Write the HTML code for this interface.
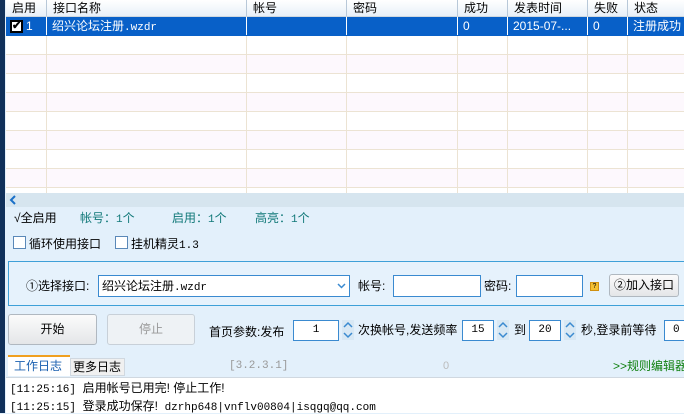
<!DOCTYPE html>
<html><head><meta charset="utf-8"><style>
*{margin:0;padding:0;box-sizing:border-box}
body{width:684px;height:413px;overflow:hidden;background:#e3f0fb;font-family:"Liberation Sans","Noto Sans CJK SC",sans-serif;font-size:12px;color:#000;position:relative}
.a{position:absolute;white-space:nowrap}
.m{font-family:"Liberation Mono","Noto Sans CJK SC",monospace;font-size:11px}
.hdr{position:absolute;left:6px;top:0;width:678px;height:17px;background:linear-gradient(#fff,#e8f0f8);border-bottom:1px solid #cfd8e0}
.hc{position:absolute;top:0;height:16px;line-height:16px;padding-left:6px;border-left:1px solid #b8c8d8}
.row{position:absolute;left:6px;width:678px;height:19px;border-bottom:1px solid #ece3d3}
.vl{position:absolute;top:17px;height:176px;width:1px;background:#ece3d3}
.sel{background:#0860c8;color:#fff}
.cell{position:absolute;top:0;height:18px;line-height:18px;padding-left:5px}
.btn{position:absolute;border:1px solid #b0b8c0;border-radius:3px;background:linear-gradient(#fbfbfb,#e4e6e8);text-align:center}
.in{position:absolute;background:#fff;border:1px solid #3a8ad0;text-align:center}
.cb{position:absolute;width:13px;height:13px;border:1px solid #5a88b8;background:#fff}
.sp{position:absolute;width:12px;height:20px;background:#d8e8f4}
</style></head><body>
<div class="a" style="left:0;top:0;width:5px;height:413px;background:#10305a"></div>
<div style="position:absolute;left:6px;top:17px;width:678px;height:176px;background:#fff"></div>
<div class="row" style="top:55px;background:#fdf8fd"></div>
<div class="row" style="top:74px"></div>
<div class="row" style="top:93px;background:#fdf8fd"></div>
<div class="row" style="top:112px"></div>
<div class="row" style="top:131px;background:#fdf8fd"></div>
<div class="row" style="top:150px"></div>
<div class="row" style="top:169px;background:#fdf8fd"></div>
<div class="row" style="top:36px"></div>
<div class="vl" style="left:46px"></div><div class="vl" style="left:246px"></div><div class="vl" style="left:346px"></div><div class="vl" style="left:457px"></div><div class="vl" style="left:507px"></div><div class="vl" style="left:587px"></div><div class="vl" style="left:627px"></div>
<div class="row sel" style="top:17px;height:19px;border:none">
<div class="a" style="left:4px;top:3px;width:13px;height:13px;background:#fff;border:2px solid #000;font-size:11px;line-height:9px;color:#000;text-align:center;font-weight:bold">✔</div>
<div class="cell" style="left:15px">1</div>
<div class="cell" style="left:40px;border-left:1px solid #fff">绍兴论坛注册<span class="m">.wzdr</span></div>
<div class="cell" style="left:240px;border-left:1px solid #fff;width:100px"></div>
<div class="cell" style="left:340px;border-left:1px solid #fff;width:111px"></div>
<div class="cell" style="left:451px;border-left:1px solid #fff">0</div>
<div class="cell" style="left:501px;border-left:1px solid #fff">2015-07-...</div>
<div class="cell" style="left:581px;border-left:1px solid #fff">0</div>
<div class="cell" style="left:621px;border-left:1px solid #fff">注册成功</div>
</div>
<div class="hdr">
<div class="hc" style="left:0;border:none">启用</div>
<div class="hc" style="left:40px">接口名称</div>
<div class="hc" style="left:240px">帐号</div>
<div class="hc" style="left:340px">密码</div>
<div class="hc" style="left:451px">成功</div>
<div class="hc" style="left:501px">发表时间</div>
<div class="hc" style="left:581px">失败</div>
<div class="hc" style="left:621px">状态</div>
</div>
<div class="a" style="left:6px;top:193px;width:678px;height:14px;background:#d6e5ef"></div>
<svg class="a" style="left:9px;top:195px" width="8" height="10"><path d="M6 1L2 5L6 9" stroke="#1a70c8" stroke-width="2" fill="none"/></svg>
<div class="a" style="left:14px;top:209px">√全启用</div>
<div class="a" style="left:80px;top:209px;color:#107878">帐号：<span class="m">1</span>个</div>
<div class="a" style="left:172px;top:209px;color:#107878">启用：<span class="m">1</span>个</div>
<div class="a" style="left:255px;top:209px;color:#107878">高亮：<span class="m">1</span>个</div>
<div class="cb" style="left:13px;top:236px"></div><div class="a" style="left:29px;top:235px">循环使用接口</div>
<div class="cb" style="left:115px;top:236px"></div><div class="a" style="left:131px;top:235px">挂机精灵<span class="m">1.3</span></div>
<div class="a" style="left:8px;top:261px;width:690px;height:45px;border:1px solid #3ea0d8;background:#e6f2fc"></div>
<div class="a" style="left:26px;top:277px">①选择接口:</div>
<div class="a" style="left:98px;top:275px;width:252px;height:22px;background:#fff;border:1px solid #3a8ad0;line-height:20px;padding-left:3px">绍兴论坛注册<span class="m">.wzdr</span><svg style="position:absolute;right:3px;top:7px" width="9" height="6"><path d="M1 1L4.5 4.5L8 1" stroke="#3a8ad0" stroke-width="1.5" fill="none"/></svg></div>
<div class="a" style="left:358px;top:277px">帐号:</div>
<div class="in" style="left:393px;top:275px;width:88px;height:22px"></div>
<div class="a" style="left:484px;top:277px">密码:</div>
<div class="in" style="left:516px;top:275px;width:67px;height:22px"></div>
<div class="a" style="left:590px;top:282px;width:9px;height:9px;background:#f4c030;border:1px solid #d09010;font-size:7px;line-height:7px;text-align:center">?</div>
<div class="btn" style="left:609px;top:274px;width:70px;height:23px;line-height:21px">②加入接口</div>
<div class="btn" style="left:8px;top:314px;width:89px;height:31px;line-height:29px">开始</div>
<div class="btn" style="left:107px;top:314px;width:88px;height:31px;line-height:29px;color:#999;border-color:#c8d0d8;background:#eef2f5">停止</div>
<div class="a" style="left:209px;top:323px">首页参数:发布</div>
<div class="in m" style="left:293px;top:320px;width:46px;height:21px;line-height:19px">1</div>
<svg class="sp" style="left:342px;top:320px" width="12" height="20"><path d="M2 7L6 3L10 7M2 13L6 17L10 13" stroke="#3a8ad0" stroke-width="1.5" fill="none"/></svg>
<div class="a" style="left:358px;top:321px">次换帐号,发送频率</div>
<div class="in m" style="left:462px;top:320px;width:32px;height:21px;line-height:19px">15</div>
<svg class="sp" style="left:497px;top:320px" width="12" height="20"><path d="M2 7L6 3L10 7M2 13L6 17L10 13" stroke="#3a8ad0" stroke-width="1.5" fill="none"/></svg>
<div class="a" style="left:514px;top:321px">到</div>
<div class="in m" style="left:529px;top:320px;width:32px;height:21px;line-height:19px">20</div>
<svg class="sp" style="left:564px;top:320px" width="12" height="20"><path d="M2 7L6 3L10 7M2 13L6 17L10 13" stroke="#3a8ad0" stroke-width="1.5" fill="none"/></svg>
<div class="a" style="left:581px;top:321px">秒,登录前等待</div>
<div class="in m" style="left:664px;top:320px;width:30px;height:21px;line-height:19px;text-align:left;padding-left:8px">0</div>
<div class="a" style="left:8px;top:355px;width:62px;height:21px;background:#fff;border-top:2px solid #f0a020;color:#1a60b0;line-height:19px;padding-left:6px">工作日志</div>
<div class="a" style="left:70px;top:358px;width:55px;height:18px;background:#f0f0f0;border:1px solid #d0d8e0;line-height:16px;padding-left:2px">更多日志</div>
<div class="a m" style="left:229px;top:360px;color:#999">[3.2.3.1]</div>
<div class="a" style="left:443px;top:360px;color:#bbb;font-size:11px">0</div>
<div class="a" style="left:613px;top:357px;color:#108010">&gt;&gt;规则编辑器</div>
<div class="a" style="left:6px;top:377px;width:678px;height:36px;background:#fff;border-top:1px solid #d0d8e0"></div>
<div class="a m" style="left:10px;top:379px">[11:25:16] <span style="font-family:'Liberation Sans','Noto Sans CJK SC',sans-serif;font-size:12px">启用帐号已用完! 停止工作!</span></div>
<div class="a m" style="left:10px;top:397px">[11:25:15] <span style="font-family:'Liberation Sans','Noto Sans CJK SC',sans-serif;font-size:12px">登录成功保存!</span>  dzrhp648|vnflv00804|isqgq@qq.com</div>
</body></html>
